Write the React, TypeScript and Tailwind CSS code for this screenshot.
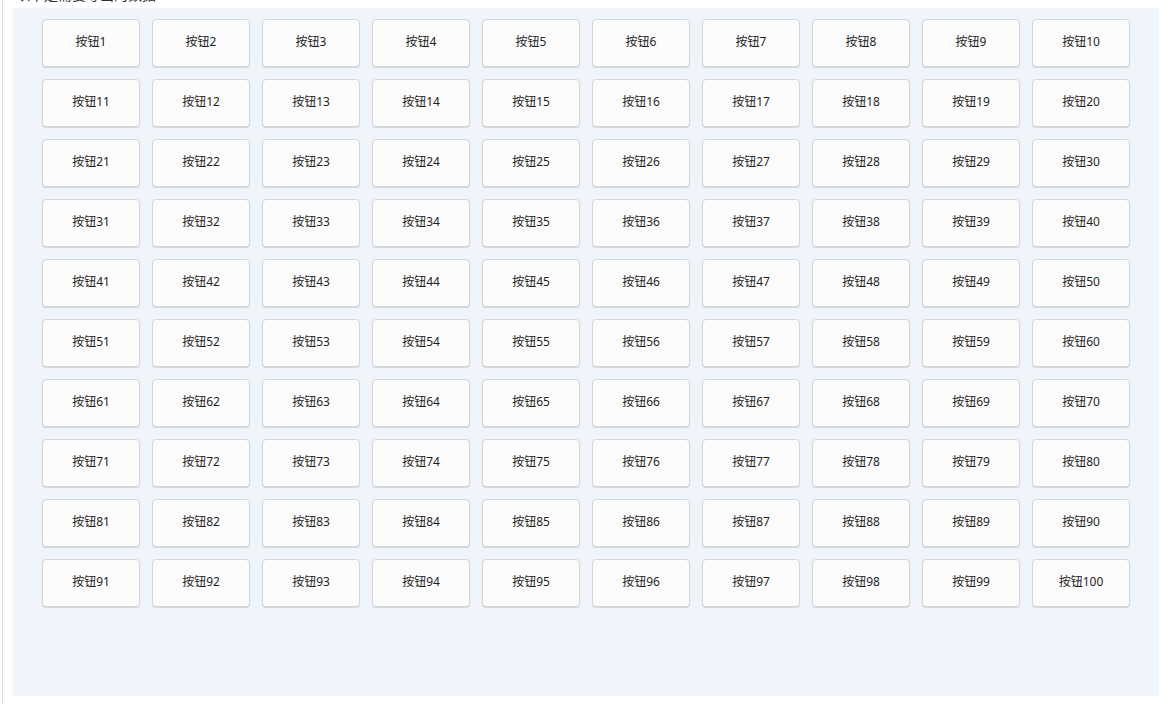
const buttons = Array.from({ length: 100 }, (_, i) => i + 1)

const App = () => {
  return (
    <div className="h-[704px] w-full bg-white pl-[2px] font-['Noto_Sans','Noto_Sans_CJK_SC',sans-serif]">
      <div className="h-full border-l border-l-[#dcdcdc] pl-[10px]">
        <div className="h-[8px] overflow-hidden pl-[3px]">
          <p className="-mt-[15px] text-[14px] leading-[20px] text-[#333]">以下是需要导出的数据</p>
        </div>
        <div className="h-[688px] w-[1146px] bg-[#f0f4fb] pl-[29px] pt-[11px]">
          <div className="grid grid-cols-[repeat(10,98px)] gap-[12px]">
            {buttons.map((n) => (
              <button
                key={n}
                className="h-[48px] rounded-[4px] border border-[#d6d6d6] bg-[#fcfcfc] pb-[2px] text-[12px] text-[#1f1f1f] shadow-[0_1px_1px_rgba(0,0,0,0.12)]"
              >
                按钮{n}
              </button>
            ))}
          </div>
        </div>
      </div>
    </div>
  )
}

export default App
